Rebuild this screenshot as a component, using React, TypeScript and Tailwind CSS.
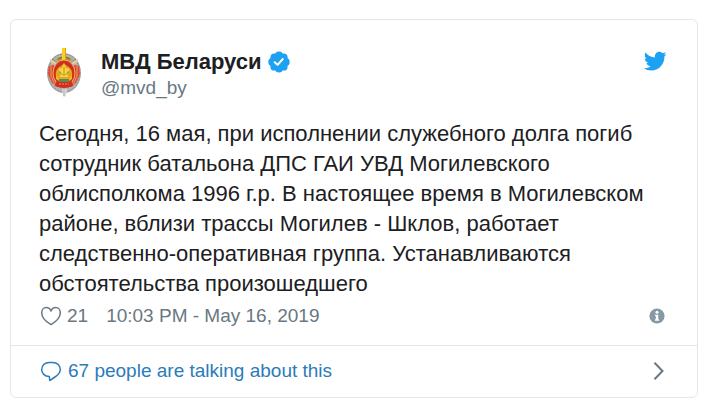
const PROFILE_URL = "#mvd_by";

function Avatar() {
  return (
    <svg viewBox="0 0 54 54" className="size-[54px] shrink-0" role="img" aria-label="МВД Беларуси">
      <ellipse cx="25" cy="28" rx="17" ry="20" fill="#b4b2ae" />
      <ellipse cx="25" cy="28" rx="16" ry="19" fill="none" stroke="#8e8c8a" strokeWidth="1" strokeDasharray="2 1" />
      <path d="M11 14l8 2 6 3-5 2-8-3zM39 14l-8 2-6 3 5 2 8-3z" fill="#d9cba6" />
      <path d="M13 14l8 5M37 14l-8 5" stroke="#7f7c70" strokeWidth="1" />
      <path d="M10 21l5-1-1 11 4 11-5-4-4-9z" fill="#e0492c" />
      <path d="M40 21l-5-1 1 11-4 11 5-4 4-9z" fill="#e0492c" />
      <path d="M12 21v10l4 9M38 21v10l-4 9" fill="none" stroke="#f09a60" strokeWidth="1" />
      <path d="M17 14q8-5 16 0l-3 4H20z" fill="#b9973a" />
      <path d="M19 14q6-4 12 0" fill="none" stroke="#6b6440" strokeWidth="1" />
      <path d="M23 3h4v14h-4z" fill="#ffcf1c" />
      <path d="M26 3h1v14h-1z" fill="#dfa312" />
      <ellipse cx="25" cy="28" rx="11" ry="13" fill="#cf2f20" stroke="#eeb45a" strokeWidth="1" />
      <path d="M18 34c-3-7 0-11 4-13l3-3 3 3c4 2 7 6 4 13z" fill="#e3a822" />
      <path d="M25 19l2 4 4 1-3 3 1 5h-8l1-5-3-3 4-1z" fill="#f8d746" />
      <path d="M20 27l4 3M30 27l-4 3M25 22v9" stroke="#c08a1c" strokeWidth="1" />
      <path d="M19 34h12l-1 3H20z" fill="#5c8a50" />
      <path d="M17 30l3 3v3l-3-2zM33 30l-3 3v3l3-2z" fill="#f0b52c" />
      <path d="M17 37q8 2 16 0l1 4q-9 4-18 0z" fill="#d42b20" />
      <path d="M20 39h10" stroke="#f0944a" strokeWidth="1" strokeDasharray="2 1" />
      <path d="M23 44h5l-1 7-2 1-1-1z" fill="#dcdcde" />
      <path d="M25 44v7" stroke="#b0b0b2" strokeWidth="1" />
    </svg>
  );
}

function VerifiedIcon() {
  return (
    <svg viewBox="0 0 22 22" className="size-[22px] shrink-0" role="img" aria-label="Verified account">
      <g fill="#1da1f2">
        <circle cx="11" cy="11" r="9" />
        <circle cx="11" cy="4.4" r="3.9" />
        <circle cx="15.7" cy="6.3" r="3.9" />
        <circle cx="17.8" cy="11" r="3.9" />
        <circle cx="15.7" cy="15.7" r="3.9" />
        <circle cx="11" cy="17.6" r="3.9" />
        <circle cx="6.3" cy="15.7" r="3.9" />
        <circle cx="4.2" cy="11" r="3.9" />
        <circle cx="6.3" cy="6.3" r="3.9" />
      </g>
      <path d="M6.7 11.2l2.9 2.6 5.2-5.8" fill="none" stroke="#fff" strokeWidth="2" strokeLinecap="round" strokeLinejoin="round" />
    </svg>
  );
}

function TwitterIcon() {
  return (
    <svg viewBox="0 0 24 24" className="size-6" fill="#1da1f2" aria-hidden="true">
      <path d="M23.4 4.9c-.8.4-1.7.6-2.6.7.9-.6 1.7-1.4 2-2.5-.9.5-1.9.9-2.9 1.1A4.7 4.7 0 0016.500 2.700c-2.600 0-4.600 2.100-4.600 4.700 0 .4 0 .7.1 1C8.200 8.200 4.700 6.400 2.400 3.500c-.4.7-.6 1.500-.6 2.400 0 1.600.8 3.100 2.100 3.900-.8 0-1.500-.2-2.100-.6v.1c0 2.300 1.600 4.200 3.700 4.600-.7.2-1.400.2-2.100.1.600 1.900 2.300 3.200 4.400 3.300A9.400 9.400 0 011 19.300c2.100 1.400 4.500 2.200 7.200 2.200 8.600 0 13.200-7.200 13.200-13.500v-.6c.8-.7 1.500-1.500 2-2.500z" />
    </svg>
  );
}

function HeartIcon() {
  return (
    <svg viewBox="0 0 24 22" className="h-[22px] w-6" fill="none" stroke="#697882" strokeWidth="1.5" strokeLinejoin="round" aria-hidden="true">
      <path d="M12 19.6C7 16.700 2.700 12.200 2.700 7.700c0-3 2-5.200 4.600-5.200 2.200 0 3.900 1.400 4.700 3.600.8-2.200 2.500-3.600 4.700-3.600 2.600 0 4.600 2.200 4.600 5.200 0 4.500-4.300 9-9.300 11.900z" />
    </svg>
  );
}

function ReplyIcon() {
  return (
    <svg viewBox="0 0 24 22" className="h-[22px] w-6" fill="none" stroke="#2b7bb9" strokeWidth="1.5" strokeLinejoin="round" aria-hidden="true">
      <path d="M10.300 16.500C5.500 16.500 2.700 13.200 2.700 9.500c0-4 3-7 7.600-7h3.400c4.600 0 7.600 3 7.600 6.700 0 2.800-1.400 4.800-3.800 6.700-2 1.500-4.300 3-6.700 4.600z" />
    </svg>
  );
}

export default function App() {
  return (
    <main className="px-[10px] pt-[19px] pb-3 pr-3 font-['Liberation_Sans',Arial,sans-serif] text-[#1c2022]">
      <article className="rounded-md border border-[#e1e8ed] bg-white">
        <div className="px-7 pt-[25px] pb-4">
          {/* Author */}
          <header className="flex items-start">
            <a href={PROFILE_URL} className="mr-2">
              <Avatar />
            </a>
            <div className="min-w-0 flex-1 pt-1">
              <a href={PROFILE_URL} className="flex items-center gap-1.5 text-[22px] leading-[26px] font-bold">
                МВД Беларуси
                <VerifiedIcon />
              </a>
              <a href={PROFILE_URL} className="block text-[19px] leading-[26px] text-[#697882]">
                @mvd_by
              </a>
            </div>
            <a href="#tweet" aria-label="View on Twitter" className="mr-0.5 pt-1">
              <TwitterIcon />
            </a>
          </header>

          {/* Tweet */}
          <p className="mt-[18px] text-[22px] leading-[30px]">
            Сегодня, 16 мая, при исполнении служебного долга погиб сотрудник батальона ДПС ГАИ УВД
            Могилевского облисполкома 1996 г.р. В настоящее время в Могилевском районе, вблизи трассы
            Могилев - Шклов, работает следственно-оперативная группа. Устанавливаются обстоятельства
            произошедшего
          </p>

          <div className="mt-1 flex items-center text-[19px] leading-[26px] text-[#697882]">
            <button type="button" aria-label="Like, 21 likes" className="flex items-center gap-1">
              <HeartIcon />
              21
            </button>
            <a href="#tweet" className="ml-[18px]">
              10:03 PM - May 16, 2019
            </a>
            <a href="#privacy" aria-label="Twitter Ads info and privacy" className="mr-1 ml-auto">
              <svg viewBox="0 0 16 16" className="size-4" aria-hidden="true">
                <circle cx="8" cy="8" r="7.6" fill="#8899a6" />
                <circle cx="8" cy="4.2" r="1.5" fill="#fff" />
                <path d="M6 6.7h3.2v4.6H10v1.4H6v-1.4h.8V8H6z" fill="#fff" />
              </svg>
            </a>
          </div>
        </div>

        {/* Conversation link */}
        <a href="#conversation" className="flex items-center border-t border-[#e1e8ed] px-7 pt-3 pb-[13px] text-[19px] leading-[26px] text-[#2b7bb9]">
          <ReplyIcon />
          <span className="ml-[5px]">67 people are talking about this</span>
          <svg viewBox="0 0 12 20" className="mr-1 ml-auto h-5 w-3" fill="none" stroke="#697882" strokeWidth="2" aria-hidden="true">
            <path d="M1.500 1.800L9.500 10l-8 8.200" />
          </svg>
        </a>
      </article>
    </main>
  );
}
